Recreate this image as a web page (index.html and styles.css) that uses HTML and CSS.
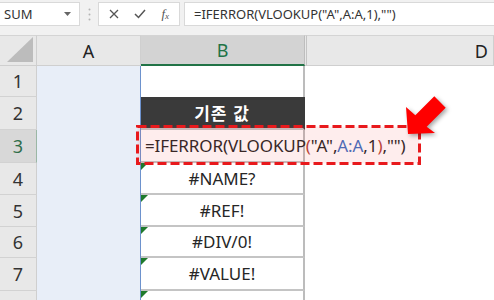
FILE: index.html
```html
<!DOCTYPE html>
<html lang="ko">
<head>
<meta charset="utf-8">
<link rel="stylesheet" href="styles.css">
</head>
<body>
<div class="app">
  <div class="toolbar">
    <div class="namebox">
      <span class="name">SUM</span>
      <svg class="dd" width="7" height="4" viewBox="0 0 7 4"><path d="M0 0H7L3.5 4Z" fill="#666"/></svg>
    </div>
    <div class="grip">
      <svg width="3" height="13" viewBox="0 0 3 13"><circle cx="1.5" cy="1.5" r="1" fill="#b4b4b4"/><circle cx="1.5" cy="6.5" r="1" fill="#b4b4b4"/><circle cx="1.5" cy="11.5" r="1" fill="#b4b4b4"/></svg>
    </div>
    <div class="fbtns">
      <svg width="10" height="10" viewBox="0 0 10 10"><path d="M1 1L9 9M9 1L1 9" stroke="#555" stroke-width="1.3"/></svg>
      <svg width="12" height="10" viewBox="0 0 12 10"><path d="M1 5L4.5 8.5L11 1" stroke="#555" stroke-width="1.5" fill="none"/></svg>
      <span class="fx">f<sub>x</sub></span>
    </div>
    <div class="formula">=IFERROR(VLOOKUP("A",A:A,1),"")</div>
  </div>
  <div class="sheet">
    <div class="corner"><span class="tri"></span></div>
    <div class="ch">A</div>
    <div class="ch ch-sel">B</div>
    <div class="ch ch-hid"></div>
    <div class="ch ch-d">D</div>

    <div class="rh">1</div><div class="ca"></div><div class="cb cb-top"></div><div class="cc"></div><div class="cd"></div>
    <div class="rh">2</div><div class="ca"></div><div class="cb cb-head">기존 값</div><div class="cc"></div><div class="cd"></div>
    <div class="rh rh-sel">3</div><div class="ca"></div><div class="cb cb-formula"><span>=IFERROR(VLOOKUP<span class="par">(</span>"A",<span class="ref">A:A</span>,1<span class="par">)</span>,"")</span></div><div class="cc"></div><div class="cd"></div>
    <div class="rh">4</div><div class="ca"></div><div class="cb cb-err">#NAME?</div><div class="cc"></div><div class="cd"></div>
    <div class="rh">5</div><div class="ca"></div><div class="cb cb-err">#REF!</div><div class="cc"></div><div class="cd"></div>
    <div class="rh">6</div><div class="ca"></div><div class="cb cb-err">#DIV/0!</div><div class="cc"></div><div class="cd"></div>
    <div class="rh">7</div><div class="ca"></div><div class="cb cb-err">#VALUE!</div><div class="cc"></div><div class="cd"></div>
    <div class="rh"></div><div class="ca"></div><div class="cb cb-err"></div><div class="cc"></div><div class="cd"></div>
  </div>

  <svg class="hl" width="285" height="40" viewBox="0 0 285 40">
    <rect x="1.5" y="1.5" width="282" height="37" fill="rgba(240,60,60,0.09)" stroke="#e8191c" stroke-width="3" stroke-dasharray="9 4"/>
  </svg>
  <svg class="arrow" width="60" height="60" viewBox="0 0 60 60">
    <polygon points="3,49 1,22 10.3,30.3 29.3,11.3 40.7,22.7 21.7,41.7 30,48" fill="#ff0000"/>
  </svg>
</div>
</body>
</html>
```

FILE: styles.css
```css
* { box-sizing: border-box; }
html, body { margin: 0; padding: 0; }
body {
  width: 494px;
  height: 300px;
  overflow: hidden;
  background: #ffffff;
  font-family: "Noto Sans", "Noto Sans CJK KR", sans-serif;
  color: #262626;
}
.app {
  position: relative;
  width: 494px;
  height: 300px;
  overflow: hidden;
}
.toolbar {
  height: 35px;
  background: #f1f1f1;
  display: flex;
  align-items: flex-start;
  padding-top: 2px;
}
.namebox {
  width: 80px;
  height: 24px;
  background: #fff;
  border: 1px solid #d9d9d9;
  border-left: none;
  display: flex;
  align-items: center;
  justify-content: space-between;
  padding: 0 8px 0 4px;
}
.name { font-size: 13px; color: #333; }
.grip {
  width: 18px;
  height: 24px;
  display: flex;
  align-items: center;
  justify-content: center;
}
.fbtns {
  width: 82px;
  height: 24px;
  background: #fff;
  border: 1px solid #d9d9d9;
  display: flex;
  align-items: center;
  justify-content: space-between;
  padding: 0 10px 0 10px;
}
.fx {
  font-family: "Liberation Serif", serif;
  font-style: italic;
  font-size: 13px;
  color: #555;
  line-height: 1;
}
.fx sub { font-size: 9px; vertical-align: -1px; }
.formula {
  flex: 1;
  margin-left: 4px;
  height: 24px;
  background: #fff;
  border: 1px solid #d9d9d9;
  border-right: none;
  font-size: 13px;
  color: #333;
  padding-left: 9px;
  line-height: 22px;
  white-space: nowrap;
}
.sheet {
  display: grid;
  grid-template-columns: 37px 104px 164px 2px 1fr;
  grid-template-rows: 31px 31px 33px 33px 32px 32px 31px 33px 32px;
}
.corner {
  background: #e8e8e8;
  border-top: 1px solid #d4d4d4;
  border-right: 1px solid #cfcfcf;
  border-bottom: 1px solid #cfcfcf;
  position: relative;
}
.tri {
  position: absolute;
  right: 3px;
  bottom: 3px;
  width: 0;
  height: 0;
  border-style: solid;
  border-width: 0 0 25px 26px;
  border-color: transparent transparent #bcbcbc transparent;
}
.ch {
  background: #e8e8e8;
  border-top: 1px solid #d4d4d4;
  border-right: 1px solid #cfcfcf;
  border-bottom: 1px solid #cfcfcf;
  display: flex;
  align-items: center;
  justify-content: center;
  font-size: 18px;
  color: #222;
}
.ch-sel {
  background: #d3d3d3;
  color: #217346;
  border-bottom: 2px solid #217346;
  border-right: 1px solid #bdbdbd;
}
.ch-hid { border-right: 1px solid #c4c4c4; }
.ch-d { justify-content: flex-end; padding-right: 5px; }
.rh {
  background: #e8e8e8;
  border-right: 1px solid #cfcfcf;
  border-bottom: 1px solid #d2d2d2;
  display: flex;
  align-items: center;
  justify-content: center;
  font-size: 18px;
  color: #333;
}
.rh-sel {
  background: #d8d8d8;
  color: #2f6e4a;
  border-right: 1px solid #9bb7a5;
}
.ca {
  background: #e8eef8;
  border-right: 1px solid #6d92cd;
}
.cb {
  background: #fff;
  display: flex;
  align-items: center;
  justify-content: center;
  font-size: 17px;
  color: #262626;
  border-right: 2px solid #bcbcbc;
  border-bottom: 2px solid #c4c4c4;
  position: relative;
}
.cb-top { border-bottom: none; }
.cb-head {
  background: #3a3a3a;
  color: #fff;
  font-weight: bold;
  font-family: "Noto Sans CJK KR", sans-serif;
  letter-spacing: 1px;
  border-right-color: #3a3a3a;
}
.cb-formula {
  justify-content: flex-start;
  padding-left: 4px;
  overflow: visible;
  white-space: nowrap;
  font-size: 17px;
  letter-spacing: -0.1px;
  z-index: 1;
}
.par { color: #b5453a; }
.ref { color: #3e6fc2; }
.cb-err::before {
  content: "";
  position: absolute;
  left: 0;
  top: 0;
  border-style: solid;
  border-width: 7px 7px 0 0;
  border-color: #1f7a2c transparent transparent transparent;
}
.cc { background: #fff; }
.cd { background: #fff; }
.hl {
  position: absolute;
  left: 136px;
  top: 125px;
  z-index: 2;
}
.arrow {
  position: absolute;
  left: 405px;
  top: 85px;
  z-index: 3;
  filter: drop-shadow(2px 2px 2px rgba(0,0,0,0.35));
}
```
